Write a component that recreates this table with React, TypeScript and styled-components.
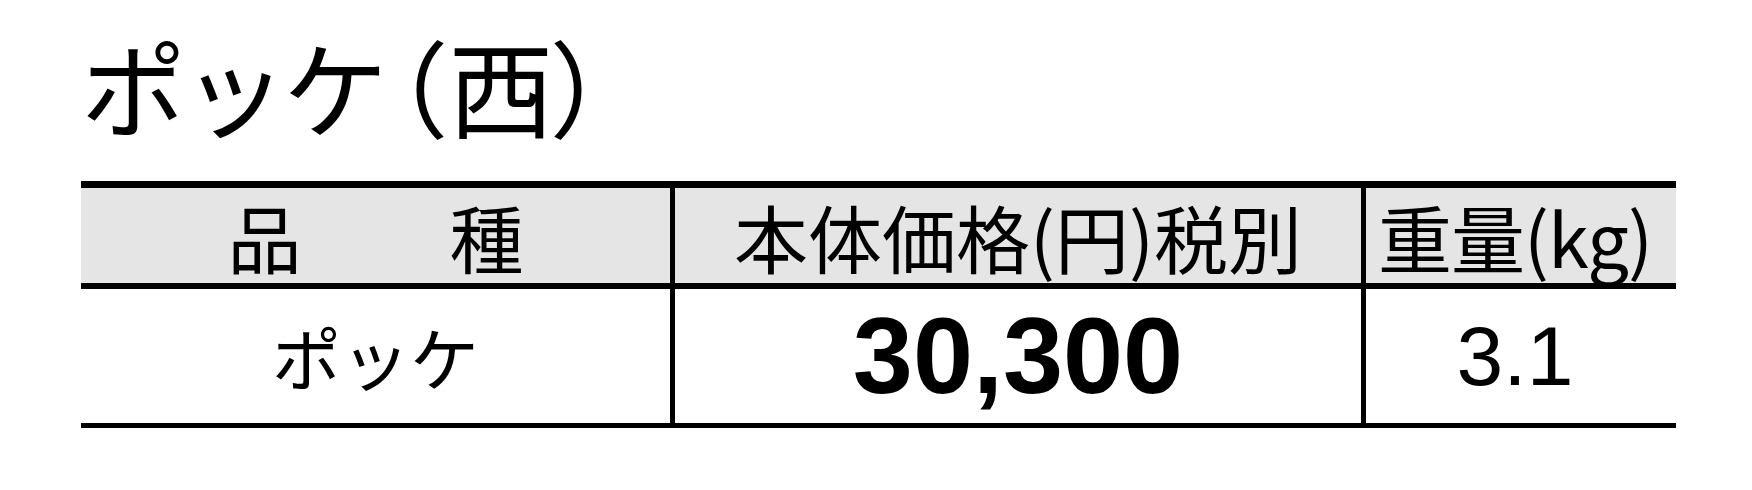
import React from "react";
import styled, { createGlobalStyle } from "styled-components";

const GlobalStyle = createGlobalStyle`
  html, body {
    margin: 0;
    padding: 0;
    background: #ffffff;
  }
  body {
    font-family: "Noto Sans CJK JP", "Noto Sans", sans-serif;
    color: #000000;
  }
`;

const Page = styled.div`
  width: 1752px;
  height: 490px;
  padding: 34px 0 0 81px;
  box-sizing: border-box;
  overflow: hidden;
`;

const Title = styled.h1`
  margin: 0 0 47px 0;
  font-size: 105px;
  font-weight: 400;
  line-height: 100px;
  letter-spacing: -4px;
  white-space: nowrap;
`;

// half-width brackets, so the glyph sits close to the text
const Paren = styled.span<{ $gap?: number }>`
  letter-spacing: 0;
  font-feature-settings: "halt";
  margin-left: ${(p) => (p.$gap ? `${p.$gap}px` : "0")};
`;

const Table = styled.div`
  display: grid;
  grid-template-columns: 589px 691px 315px;
  width: 1595px;
  border-top: 7px solid #000;
  border-bottom: 5px solid #000;
`;

const Cell = styled.div<{ $head?: boolean; $divider?: boolean; $shift?: number }>`
  display: flex;
  align-items: center;
  justify-content: center;
  box-sizing: border-box;
  height: ${(p) => (p.$head ? "101px" : "134px")};
  padding-right: ${(p) => (p.$shift ? `${p.$shift}px` : "0")};
  background: ${(p) => (p.$head ? "#e5e5e5" : "#ffffff")};
  border-bottom: ${(p) => (p.$head ? "6px solid #000" : "none")};
  border-left: ${(p) => (p.$divider ? "5px solid #000" : "none")};
  white-space: nowrap;
`;

const HeadText = styled.span<{ $tight?: number }>`
  font-size: 74px;
  font-weight: 400;
  line-height: 1;
  letter-spacing: ${(p) => (p.$tight ? `${p.$tight}px` : "0")};
`;

const NameText = styled.span`
  font-size: 69px;
  font-weight: 400;
  line-height: 1;
`;

const Price = styled.span`
  font-family: "Liberation Sans", Arial, sans-serif;
  font-weight: 700;
  font-size: 108px;
  line-height: 1;
`;

const Weight = styled.span`
  font-family: "Liberation Sans", Arial, sans-serif;
  font-size: 84px;
  line-height: 1;
`;

export default function App() {
  return (
    <>
      <GlobalStyle />
      <Page>
        <Title>
          ポッケ<Paren $gap={12}>（</Paren>西<Paren>）</Paren>
        </Title>
        <Table>
          <Cell $head>
            <HeadText>品　　種</HeadText>
          </Cell>
          <Cell $head $divider>
            <HeadText>本体価格(円)税別</HeadText>
          </Cell>
          <Cell $head $divider $shift={12}>
            <HeadText $tight={-1}>重量(kg)</HeadText>
          </Cell>
          <Cell>
            <NameText>ポッケ</NameText>
          </Cell>
          <Cell $divider>
            <Price>30,300</Price>
          </Cell>
          <Cell $divider $shift={12}>
            <Weight>3.1</Weight>
          </Cell>
        </Table>
      </Page>
    </>
  );
}
